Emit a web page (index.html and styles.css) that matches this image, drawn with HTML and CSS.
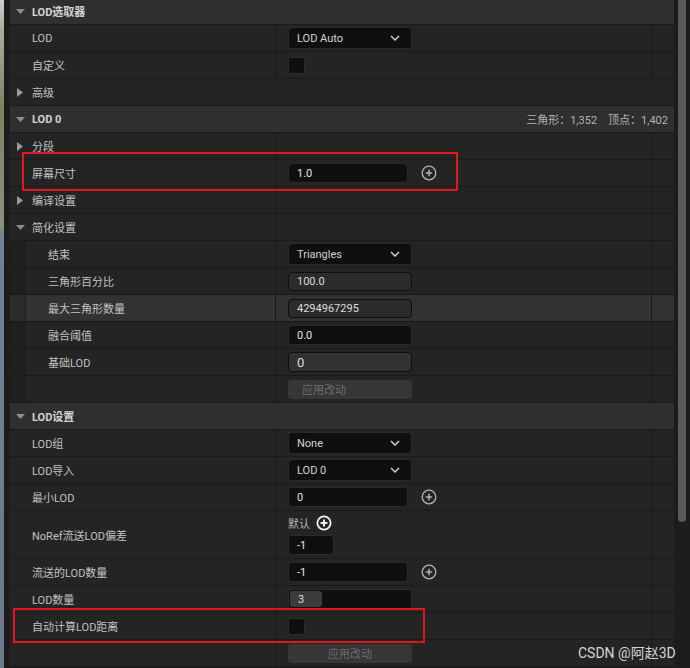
FILE: index.html
```html
<!DOCTYPE html>
<html>
<head>
    <meta charset="utf-8">
    <title>LOD设置</title>
    <link rel="stylesheet" href="styles.css">
</head>
<body>
<div class="screen">
    <div class="backdrop"></div>
    <div class="gutter"></div>
    <div class="panel">
        <div class="row head">
            <span class="tw"><svg width="9" height="5" viewBox="0 0 9 5"><path d="M0 0H9L4.5 5Z" fill="#8e8e8e"/></svg></span>LOD选取器
        </div>
        <div class="row">
            <div class="name">LOD</div>
            <div class="value">
                <div class="combo"><span>LOD Auto</span><svg width="10" height="6" viewBox="0 0 10 6"><path d="M1 1L5 5L9 1" fill="none" stroke="#cfcfcf" stroke-width="1.5"/></svg></div>
            </div>
            <div class="reset"></div>
        </div>
        <div class="row">
            <div class="name">自定义</div>
            <div class="value"><div class="check"></div></div>
            <div class="reset"></div>
        </div>
        <div class="row fold">
            <span class="tw"><svg width="6" height="9" viewBox="0 0 6 9"><path d="M0 0V9L6 4.5Z" fill="#9a9a9a"/></svg></span>高级
        </div>
        <div class="row head">
            <span class="tw"><svg width="9" height="5" viewBox="0 0 9 5"><path d="M0 0H9L4.5 5Z" fill="#8e8e8e"/></svg></span>LOD 0
            <span class="stats"><span>三角形：1,352</span><span>顶点：1,402</span></span>
        </div>
        <div class="row">
            <div class="name group"><span class="tw"><svg width="6" height="9" viewBox="0 0 6 9"><path d="M0 0V9L6 4.5Z" fill="#9a9a9a"/></svg></span>分段</div>
            <div class="value"></div>
            <div class="reset"></div>
        </div>
        <div class="row">
            <div class="name">屏幕尺寸</div>
            <div class="value">
                <div class="field">1.0</div>
                <svg class="plus" width="16" height="16" viewBox="0 0 16 16"><circle cx="8" cy="8" r="6.8" fill="none" stroke="#b2b2b2" stroke-width="1.3"/><path d="M8 4.8V11.2M4.8 8H11.2" stroke="#b2b2b2" stroke-width="1.5"/></svg>
            </div>
            <div class="reset"></div>
        </div>
        <div class="row">
            <div class="name group"><span class="tw"><svg width="6" height="9" viewBox="0 0 6 9"><path d="M0 0V9L6 4.5Z" fill="#9a9a9a"/></svg></span>编译设置</div>
            <div class="value"></div>
            <div class="reset"></div>
        </div>
        <div class="row">
            <div class="name group open"><span class="tw"><svg width="9" height="5" viewBox="0 0 9 5"><path d="M0 0H9L4.5 5Z" fill="#8e8e8e"/></svg></span>简化设置</div>
            <div class="value"></div>
            <div class="reset"></div>
        </div>
        <div class="row">
            <div class="name sub"><span class="indent"></span>结束</div>
            <div class="value">
                <div class="combo"><span>Triangles</span><svg width="10" height="6" viewBox="0 0 10 6"><path d="M1 1L5 5L9 1" fill="none" stroke="#cfcfcf" stroke-width="1.5"/></svg></div>
            </div>
            <div class="reset"></div>
        </div>
        <div class="row">
            <div class="name sub"><span class="indent"></span>三角形百分比</div>
            <div class="value"><div class="spin">100.0</div></div>
            <div class="reset"></div>
        </div>
        <div class="row hot">
            <div class="name sub"><span class="indent"></span>最大三角形数量</div>
            <div class="value"><div class="spin">4294967295</div></div>
            <div class="reset"></div>
        </div>
        <div class="row">
            <div class="name sub"><span class="indent"></span>融合阈值</div>
            <div class="value"><div class="field wide">0.0</div></div>
            <div class="reset"></div>
        </div>
        <div class="row">
            <div class="name sub"><span class="indent"></span>基础LOD</div>
            <div class="value"><div class="spin big">0</div></div>
            <div class="reset"></div>
        </div>
        <div class="row">
            <div class="name sub"><span class="indent"></span></div>
            <div class="value"><div class="apply left">应用改动</div></div>
            <div class="reset"></div>
        </div>
        <div class="row head">
            <span class="tw"><svg width="9" height="5" viewBox="0 0 9 5"><path d="M0 0H9L4.5 5Z" fill="#8e8e8e"/></svg></span>LOD设置
        </div>
        <div class="row">
            <div class="name">LOD组</div>
            <div class="value">
                <div class="combo"><span>None</span><svg width="10" height="6" viewBox="0 0 10 6"><path d="M1 1L5 5L9 1" fill="none" stroke="#cfcfcf" stroke-width="1.5"/></svg></div>
            </div>
            <div class="reset"></div>
        </div>
        <div class="row">
            <div class="name">LOD导入</div>
            <div class="value">
                <div class="combo"><span>LOD 0</span><svg width="10" height="6" viewBox="0 0 10 6"><path d="M1 1L5 5L9 1" fill="none" stroke="#cfcfcf" stroke-width="1.5"/></svg></div>
            </div>
            <div class="reset"></div>
        </div>
        <div class="row">
            <div class="name">最小LOD</div>
            <div class="value">
                <div class="field">0</div>
                <svg class="plus" width="16" height="16" viewBox="0 0 16 16"><circle cx="8" cy="8" r="6.8" fill="none" stroke="#b2b2b2" stroke-width="1.3"/><path d="M8 4.8V11.2M4.8 8H11.2" stroke="#b2b2b2" stroke-width="1.5"/></svg>
            </div>
            <div class="reset"></div>
        </div>
        <div class="row tall">
            <div class="name">NoRef流送LOD偏差</div>
            <div class="value stack">
                <div class="line">默认<svg class="plus-on" width="16" height="16" viewBox="0 0 16 16"><circle cx="8" cy="8" r="6.6" fill="none" stroke="#f2f2f2" stroke-width="1.8"/><path d="M8 4.6V11.4M4.6 8H11.4" stroke="#f2f2f2" stroke-width="1.9"/></svg></div>
                <div class="field short">-1</div>
            </div>
            <div class="reset"></div>
        </div>
        <div class="row">
            <div class="name">流送的LOD数量</div>
            <div class="value">
                <div class="field">-1</div>
                <svg class="plus" width="16" height="16" viewBox="0 0 16 16"><circle cx="8" cy="8" r="6.8" fill="none" stroke="#b2b2b2" stroke-width="1.3"/><path d="M8 4.8V11.2M4.8 8H11.2" stroke="#b2b2b2" stroke-width="1.5"/></svg>
            </div>
            <div class="reset"></div>
        </div>
        <div class="row">
            <div class="name">LOD数量</div>
            <div class="value">
                <div class="slider"><div class="fill" style="width:32px">3</div></div>
            </div>
            <div class="reset"></div>
        </div>
        <div class="row">
            <div class="name">自动计算LOD距离</div>
            <div class="value"><div class="check"></div></div>
            <div class="reset"></div>
        </div>
        <div class="row">
            <div class="name"></div>
            <div class="value"><div class="apply">应用改动</div></div>
            <div class="reset"></div>
        </div>
    </div>
    <div class="scroll"><div class="thumb"></div></div>

    <!-- 标注框 -->
    <div class="redbox box-a"></div>
    <div class="redbox box-b"></div>
    <div class="mark">CSDN @阿赵3D</div>
</div>
</body>
</html>
```

FILE: styles.css
```css
* {
    box-sizing: border-box;
}

body {
    margin: 0;
    background: #1b1b1b;
    font-family: Roboto, "Noto Sans CJK SC", sans-serif;
    font-size: 11px;
    color: #c2c2c2;
    overflow: hidden;
}

.screen {
    position: relative;
    display: flex;
    height: 668px;
    overflow: hidden;
}

.backdrop {
    width: 4px;
    background: linear-gradient(#c9d0d8 0, #a6ad9f 30px, #77845f 110px, #8d9082 225px, #737f92 236px, #6d798f 668px);
}

.gutter {
    width: 6px;
    background: #1c1c1c;
}

.panel {
    width: 664px;
    margin-top: -2px;
    background: #1a1a1a;
}

.scroll {
    width: 16px;
    background: #1c1c1c;
    padding-left: 4px;
}

.thumb {
    width: 8px;
    height: 522px;
    background: #5a5a5a;
    border-radius: 0 0 4px 4px;
}

.row {
    display: flex;
    align-items: stretch;
    height: 27px;
    border-bottom: 1px solid #1a1a1a;
    background: #242424;
}

.row.tall {
    height: 48px;
}

.row.hot {
    background: #323232;
}

.row.head, .row.fold {
    align-items: center;
    padding-left: 6px;
}

.row.head {
    background: #2f2f2f;
    font-weight: bold;
    color: #d4d4d4;
}

.tw {
    width: 16px;
    display: flex;
    align-items: center;
}

.tw svg[width="6"] {
    margin-left: 1px;
}

.stats {
    margin-left: auto;
    padding-right: 6px;
    font-weight: normal;
    color: #b4b4b4;
    display: flex;
    gap: 11px;
}

.name {
    width: 266px;
    border-right: 1px solid #1a1a1a;
    display: flex;
    align-items: center;
    padding-left: 22px;
}

.name.group {
    padding-left: 6px;
}

.name.sub {
    padding-left: 0;
}

.indent {
    width: 16px;
    height: 100%;
    background: #1f1f1f;
    border-right: 1px solid #1c1c1c;
    margin-right: 22px;
}

.hot .indent {
    background: #2b2b2b;
}

.value {
    width: 376px;
    border-right: 1px solid #1a1a1a;
    display: flex;
    align-items: center;
    padding-left: 12px;
}

.value.stack {
    flex-direction: column;
    align-items: flex-start;
    padding-top: 3px;
    gap: 3px;
}

.reset {
    flex: 1;
}

.combo {
    width: 124px;
    height: 22px;
    background: #0f0f0f;
    border: 1px solid #2a2a2a;
    border-radius: 4px;
    display: flex;
    align-items: center;
    justify-content: space-between;
    padding: 0 11px 0 8px;
    color: #d2d2d2;
}

.check {
    width: 17px;
    height: 17px;
    background: #0f0f0f;
    border: 1px solid #2c2c2c;
    border-radius: 3px;
}

.field {
    width: 120px;
    height: 20px;
    background: #0f0f0f;
    border: 1px solid #2a2a2a;
    border-radius: 4px;
    padding-left: 8px;
    display: flex;
    align-items: center;
    color: #e6e6e6;
}

.field.wide {
    width: 124px;
}

.field.short {
    width: 46px;
}

.spin {
    width: 124px;
    height: 19px;
    background: #2b2b2b;
    border: 1px solid #0e0e0e;
    border-radius: 4px;
    padding-left: 8px;
    display: flex;
    align-items: center;
    color: #dedede;
}

.spin.big {
    height: 20px;
    font-size: 13px;
    background: #313131;
}

.plus {
    margin-left: 13px;
}

.line {
    height: 18px;
    display: flex;
    align-items: center;
    color: #b8b8b8;
}

.plus-on {
    margin-left: 6px;
}

.slider {
    width: 124px;
    height: 20px;
    background: #0f0f0f;
    border: 1px solid #2a2a2a;
    border-radius: 4px;
    padding: 1px;
}

.fill {
    height: 100%;
    background: #3b3b3b;
    border-radius: 3px;
    padding-left: 8px;
    display: flex;
    align-items: center;
    color: #dedede;
}

.apply {
    width: 124px;
    height: 19px;
    background: #373737;
    border-radius: 4px;
    display: flex;
    align-items: center;
    justify-content: center;
    color: #6c6c6c;
}

.apply.left {
    justify-content: flex-start;
    padding-left: 14px;
}

.redbox {
    position: absolute;
    border: 2px solid #e3161f;
}

.box-a {
    left: 22px;
    top: 152px;
    width: 436px;
    height: 39px;
}

.box-b {
    left: 13px;
    top: 608px;
    width: 412px;
    height: 35px;
}

.mark {
    position: absolute;
    left: 578px;
    top: 642px;
    font-size: 14px;
    color: #d6d6d6;
    white-space: nowrap;
}
```
